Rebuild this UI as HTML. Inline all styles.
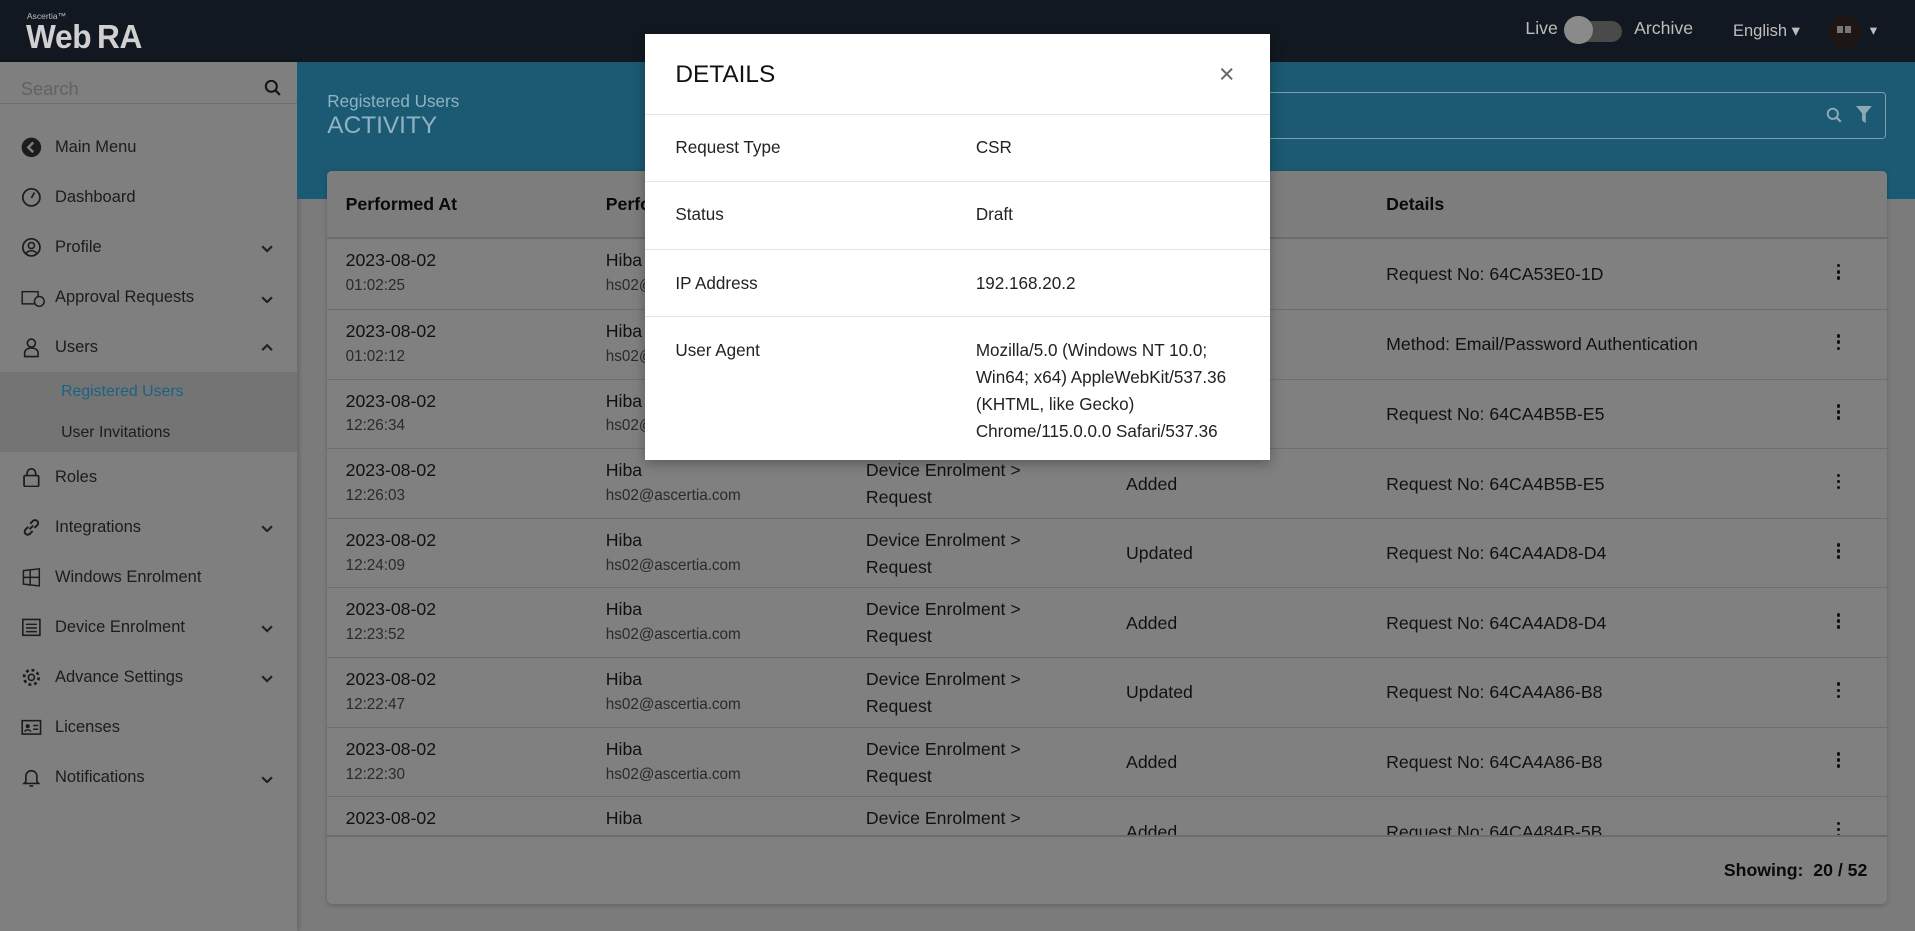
<!DOCTYPE html>
<html><head><meta charset="utf-8"><style>
html,body{margin:0;padding:0;overflow:hidden;width:1915px;height:931px;background:#7b7b7b}
#w{zoom:1.2213;width:1568px;height:762px;position:relative;font-family:"Liberation Sans",sans-serif;color:#111;overflow:hidden}
.a{position:absolute}
#hdr{left:0;top:0;width:1568px;height:51px;background:#121821}
#side{left:0;top:51px;width:243px;height:711px;background:#7f7f7f;box-shadow:2px 0 3px rgba(0,0,0,.15)}
.mi{position:absolute;left:45px;font-size:13.5px;color:#1c1c1c}
.ic{position:absolute;left:17px;width:17px;height:17px}
.chev{position:absolute;left:214px;width:10px;height:6px}
#band{left:243px;top:51px;width:1325px;height:112px;background:#1b5a72}
#card{left:268px;top:140px;width:1277px;height:600px;background:#808080;border-radius:4px;box-shadow:0 1px 4px rgba(0,0,0,.2);overflow:hidden}
.th{position:absolute;top:19px;font-weight:bold;font-size:14.5px;color:#0a0a0a}
.row{position:absolute;left:0;width:1277px;height:57px;border-top:1px solid #6e6e6e;font-size:14.5px;color:#111}
.row span{position:absolute}
.l1{top:9px}.l2{top:31px;font-size:12.5px;color:#2a2a2a}
.kb{position:absolute;left:1236px;top:20px;width:3px}
.kb i{display:block;width:3px;height:3px;background:#111;border-radius:50%;margin-bottom:2px}
#modal{left:528px;top:28px;width:512px;height:349px;background:#fff;box-shadow:0 3px 10px rgba(0,0,0,.3)}
.mr{position:absolute;left:0;width:512px;border-top:1px solid #e3e3e3;font-size:14px;color:#222;line-height:22px}
.mr .k{position:absolute;left:25px;top:17px}
.mr .v{position:absolute;left:271px;top:17px}
</style></head><body><div id="w">
<div id="hdr" class="a">
 <div class="a" style="left:22px;top:9px;font-size:7px;color:#bbb">Ascertia™</div>
 <div class="a" style="left:21px;top:15px;font-size:27px;color:#d0d0d0;letter-spacing:-0.3px;font-weight:bold;transform:scaleX(.96);transform-origin:left">Web<span style="margin-left:5px">RA</span></div>
 <div class="a" style="left:1249px;top:15px;font-size:14.5px;color:#bdbdbd">Live</div>
 <div class="a" style="left:1282px;top:17px;width:46px;height:17px;border-radius:9px;background:#4a4a4a"></div>
 <div class="a" style="left:1281px;top:13px;width:23px;height:23px;border-radius:50%;background:#8a8a8a"></div>
 <div class="a" style="left:1338px;top:15px;font-size:14.5px;color:#bdbdbd">Archive</div>
 <div class="a" style="left:1419px;top:17px;font-size:13.5px;color:#bdbdbd">English ▾</div>
 <div class="a" style="left:1497px;top:12px;width:27px;height:27px;border-radius:50%;background:#1e1614"></div>
 <div class="a" style="left:1504px;top:21px;width:5px;height:6px;background:#777"></div><div class="a" style="left:1511px;top:21px;width:5px;height:6px;background:#777"></div>
 <div class="a" style="left:1531px;top:18px;font-size:12px;color:#bdbdbd">▾</div>
</div>
<div id="side" class="a">
 <div class="a" style="left:17px;top:13px;font-size:15px;color:#626262">Search</div>
 <svg class="a" style="left:216px;top:14px" width="14" height="14" viewBox="0 0 14 14"><circle cx="6" cy="6" r="4.5" fill="none" stroke="#111" stroke-width="1.6"/><path d="M9.3 9.3 13 13" stroke="#111" stroke-width="1.8"/></svg>
 <div class="a" style="left:0;top:33px;width:243px;height:1px;background:#6d6d6d"></div>
 <svg class="ic" style="top:61px" viewBox="0 0 17 17"><circle cx="8.5" cy="8.5" r="8" fill="#1c1c1c"/><path d="M10 4.5 6 8.5 10 12.5" stroke="#7f7f7f" stroke-width="2" fill="none"/></svg>
 <div class="mi" style="top:62px">Main Menu</div>
 <svg class="ic" style="top:102px" viewBox="0 0 17 17"><circle cx="8.5" cy="8.5" r="7" fill="none" stroke="#1c1c1c" stroke-width="1.4"/><path d="M8.5 9 11 4.5" stroke="#1c1c1c" stroke-width="1.4"/></svg>
 <div class="mi" style="top:103px">Dashboard</div>
 <svg class="ic" style="top:143px" viewBox="0 0 17 17"><circle cx="8.5" cy="8.5" r="7" fill="none" stroke="#1c1c1c" stroke-width="1.4"/><circle cx="8.5" cy="7" r="2.5" fill="none" stroke="#1c1c1c" stroke-width="1.3"/><path d="M4 13.5c2-3 7-3 9 0" stroke="#1c1c1c" stroke-width="1.3" fill="none"/></svg>
 <div class="mi" style="top:144px">Profile</div><svg class="chev" style="top:150px" viewBox="0 0 10 6"><path d="M1 1l4 4 4-4" stroke="#222" stroke-width="1.8" fill="none"/></svg>
 <svg class="ic" style="top:185px;width:20px" viewBox="0 0 20 17"><rect x="1" y="3" width="13" height="10" fill="none" stroke="#1c1c1c" stroke-width="1.2"/><circle cx="15" cy="11" r="4" fill="#7f7f7f" stroke="#1c1c1c" stroke-width="1.2"/></svg>
 <div class="mi" style="top:185px">Approval Requests</div><svg class="chev" style="top:191px" viewBox="0 0 10 6"><path d="M1 1l4 4 4-4" stroke="#222" stroke-width="1.8" fill="none"/></svg>
 <svg class="ic" style="top:225px" viewBox="0 0 17 17"><circle cx="8.5" cy="5" r="3.3" fill="none" stroke="#1c1c1c" stroke-width="1.3"/><path d="M3 16v-3c0-2 2-4 5.5-4s5.5 2 5.5 4v3z" fill="none" stroke="#1c1c1c" stroke-width="1.3"/></svg>
 <div class="mi" style="top:226px">Users</div><svg class="chev" style="top:231px" viewBox="0 0 10 6"><path d="M1 5l4-4 4 4" stroke="#222" stroke-width="1.8" fill="none"/></svg>
 <div class="a" style="left:0;top:254px;width:243px;height:65px;background:#747474"></div>
 <div class="mi" style="left:50px;top:263px;font-size:13px;color:#1a6384">Registered Users</div>
 <div class="mi" style="left:50px;top:296px;font-size:13px">User Invitations</div>
 <svg class="ic" style="top:331px" viewBox="0 0 17 17"><rect x="2.5" y="7" width="12" height="9" rx="1" fill="none" stroke="#1c1c1c" stroke-width="1.4"/><path d="M5 7V5a3.5 3.5 0 0 1 7 0v2" fill="none" stroke="#1c1c1c" stroke-width="1.4"/></svg>
 <div class="mi" style="top:332px">Roles</div>
 <svg class="ic" style="top:372px" viewBox="0 0 17 17"><path d="M7 10 10 7M6 8 3.5 10.5a2.5 2.5 0 0 0 3.5 3.5L9.5 11.5M11 9l2.5-2.5A2.5 2.5 0 0 0 10 3L7.5 5.5" fill="none" stroke="#1c1c1c" stroke-width="1.6"/></svg>
 <div class="mi" style="top:373px">Integrations</div><svg class="chev" style="top:379px" viewBox="0 0 10 6"><path d="M1 1l4 4 4-4" stroke="#222" stroke-width="1.8" fill="none"/></svg>
 <svg class="ic" style="top:413px" viewBox="0 0 17 17"><path d="M2 3l13-1.5v14L2 14zM2 8.5h13M7.5 2.5v13" fill="none" stroke="#1c1c1c" stroke-width="1.2"/></svg>
 <div class="mi" style="top:414px">Windows Enrolment</div>
 <svg class="ic" style="top:454px" viewBox="0 0 17 17"><rect x="1.5" y="2" width="14" height="13" fill="none" stroke="#1c1c1c" stroke-width="1.3"/><path d="M4 6h9M4 9h9M4 12h9" stroke="#1c1c1c" stroke-width="1.2"/></svg>
 <div class="mi" style="top:455px">Device Enrolment</div><svg class="chev" style="top:461px" viewBox="0 0 10 6"><path d="M1 1l4 4 4-4" stroke="#222" stroke-width="1.8" fill="none"/></svg>
 <svg class="ic" style="top:495px" viewBox="0 0 17 17"><circle cx="8.5" cy="8.5" r="2.5" fill="none" stroke="#1c1c1c" stroke-width="1.3"/><circle cx="8.5" cy="8.5" r="6" fill="none" stroke="#1c1c1c" stroke-width="2.2" stroke-dasharray="2.4 2.3"/></svg>
 <div class="mi" style="top:496px">Advance Settings</div><svg class="chev" style="top:502px" viewBox="0 0 10 6"><path d="M1 1l4 4 4-4" stroke="#222" stroke-width="1.8" fill="none"/></svg>
 <svg class="ic" style="top:536px" viewBox="0 0 17 17"><rect x="1" y="3" width="15" height="11" fill="none" stroke="#1c1c1c" stroke-width="1.3"/><circle cx="5.5" cy="7.5" r="1.7" fill="#1c1c1c"/><path d="M3 12c1-2 4-2 5 0M10 7h4M10 10h4" stroke="#1c1c1c" stroke-width="1.2" fill="none"/></svg>
 <div class="mi" style="top:537px">Licenses</div>
 <svg class="ic" style="top:577px" viewBox="0 0 17 17"><path d="M4 12V7.5a4.5 4.5 0 0 1 9 0V12l1.5 1.5h-12zM7 15.5h3" fill="none" stroke="#1c1c1c" stroke-width="1.3"/></svg>
 <div class="mi" style="top:578px">Notifications</div><svg class="chev" style="top:584px" viewBox="0 0 10 6"><path d="M1 1l4 4 4-4" stroke="#222" stroke-width="1.8" fill="none"/></svg>
</div>
<div id="band" class="a">
 <div class="a" style="left:25px;top:24px;font-size:14px;color:#8fb3c2">Registered Users</div>
 <div class="a" style="left:25px;top:41px;font-size:20px;color:#8fb3c2">ACTIVITY</div>
 <div class="a" style="left:780px;top:24px;width:520px;height:37px;border:1px solid #7aa0b0;border-radius:3px"></div>
 <svg class="a" style="left:1252px;top:37px" width="13" height="13" viewBox="0 0 14 14"><circle cx="6" cy="6" r="4.5" fill="none" stroke="#8ea9b4" stroke-width="1.7"/><path d="M9.3 9.3 13 13" stroke="#8ea9b4" stroke-width="2"/></svg>
 <svg class="a" style="left:1277px;top:36px" width="13" height="14" viewBox="0 0 13 14"><path d="M0 0h13L8 6v8L5 12V6z" fill="#8ea9b4"/></svg>
</div>
<div id="card" class="a">
 <div class="a" style="left:0;top:0;width:1277px;height:55px;background:#7d7d7d"></div>
 <div class="th" style="left:15px">Performed At</div>
 <div class="th" style="left:228px">Performed By</div>
 <div class="th" style="left:867px">Details</div>
 <div class="a" style="left:0;top:54px;width:1277px;height:2px;background:#6c6c6c"></div>
 <div class="a" style="left:0;top:56px;width:1277px;height:488px;overflow:hidden">
  <div class="row" style="top:0;border-top:0"><span class="l1" style="left:15px">2023-08-02</span><span class="l2" style="left:15px">01:02:25</span><span class="l1" style="left:228px">Hiba</span><span class="l2" style="left:228px">hs02@ascertia.com</span><span style="left:867px;top:20px">Request No: 64CA53E0-1D</span><div class="kb"><i></i><i></i><i></i></div></div>
  <div class="row" style="top:57px"><span class="l1" style="left:15px">2023-08-02</span><span class="l2" style="left:15px">01:02:12</span><span class="l1" style="left:228px">Hiba</span><span class="l2" style="left:228px">hs02@ascertia.com</span><span style="left:867px;top:20px">Method: Email/Password Authentication</span><div class="kb"><i></i><i></i><i></i></div></div>
  <div class="row" style="top:114px"><span class="l1" style="left:15px">2023-08-02</span><span class="l2" style="left:15px">12:26:34</span><span class="l1" style="left:228px">Hiba</span><span class="l2" style="left:228px">hs02@ascertia.com</span><span style="left:867px;top:20px">Request No: 64CA4B5B-E5</span><div class="kb"><i></i><i></i><i></i></div></div>
  <div class="row" style="top:171px"><span class="l1" style="left:15px">2023-08-02</span><span class="l2" style="left:15px">12:26:03</span><span class="l1" style="left:228px">Hiba</span><span class="l2" style="left:228px">hs02@ascertia.com</span><span class="l1" style="left:441px">Device Enrolment &gt;</span><span style="left:441px;top:31px">Request</span><span style="left:654px;top:20px">Added</span><span style="left:867px;top:20px">Request No: 64CA4B5B-E5</span><div class="kb"><i></i><i></i><i></i></div></div>
  <div class="row" style="top:228px"><span class="l1" style="left:15px">2023-08-02</span><span class="l2" style="left:15px">12:24:09</span><span class="l1" style="left:228px">Hiba</span><span class="l2" style="left:228px">hs02@ascertia.com</span><span class="l1" style="left:441px">Device Enrolment &gt;</span><span style="left:441px;top:31px">Request</span><span style="left:654px;top:20px">Updated</span><span style="left:867px;top:20px">Request No: 64CA4AD8-D4</span><div class="kb"><i></i><i></i><i></i></div></div>
  <div class="row" style="top:285px"><span class="l1" style="left:15px">2023-08-02</span><span class="l2" style="left:15px">12:23:52</span><span class="l1" style="left:228px">Hiba</span><span class="l2" style="left:228px">hs02@ascertia.com</span><span class="l1" style="left:441px">Device Enrolment &gt;</span><span style="left:441px;top:31px">Request</span><span style="left:654px;top:20px">Added</span><span style="left:867px;top:20px">Request No: 64CA4AD8-D4</span><div class="kb"><i></i><i></i><i></i></div></div>
  <div class="row" style="top:342px"><span class="l1" style="left:15px">2023-08-02</span><span class="l2" style="left:15px">12:22:47</span><span class="l1" style="left:228px">Hiba</span><span class="l2" style="left:228px">hs02@ascertia.com</span><span class="l1" style="left:441px">Device Enrolment &gt;</span><span style="left:441px;top:31px">Request</span><span style="left:654px;top:20px">Updated</span><span style="left:867px;top:20px">Request No: 64CA4A86-B8</span><div class="kb"><i></i><i></i><i></i></div></div>
  <div class="row" style="top:399px"><span class="l1" style="left:15px">2023-08-02</span><span class="l2" style="left:15px">12:22:30</span><span class="l1" style="left:228px">Hiba</span><span class="l2" style="left:228px">hs02@ascertia.com</span><span class="l1" style="left:441px">Device Enrolment &gt;</span><span style="left:441px;top:31px">Request</span><span style="left:654px;top:20px">Added</span><span style="left:867px;top:20px">Request No: 64CA4A86-B8</span><div class="kb"><i></i><i></i><i></i></div></div>
  <div class="row" style="top:456px"><span class="l1" style="left:15px">2023-08-02</span><span class="l1" style="left:228px">Hiba</span><span class="l1" style="left:441px">Device Enrolment &gt;</span><span style="left:654px;top:20px">Added</span><span style="left:867px;top:20px">Request No: 64CA484B-5B</span><div class="kb"><i></i><i></i><i></i></div></div>
 </div>
 <div class="a" style="left:0;top:544px;width:1277px;height:1px;background:#6c6c6c"></div>
 <div class="a" style="right:16px;top:564px;font-size:14.5px;font-weight:bold;color:#0a0a0a">Showing:&nbsp; 20 / 52</div>
</div>
<div id="modal" class="a">
 <div class="a" style="left:25px;top:22px;font-size:20px;color:#111">DETAILS</div>
 <div class="a" style="left:470px;top:20px;font-size:22px;color:#666">×</div>
 <div class="mr" style="top:65px;height:55px"><span class="k">Request Type</span><span class="v">CSR</span></div>
 <div class="mr" style="top:120px;height:55px"><span class="k">Status</span><span class="v">Draft</span></div>
 <div class="mr" style="top:176px;height:55px"><span class="k">IP Address</span><span class="v">192.168.20.2</span></div>
 <div class="mr" style="top:231px;height:118px"><span class="k">User Agent</span><span class="v">Mozilla/5.0 (Windows NT 10.0;<br>Win64; x64) AppleWebKit/537.36<br>(KHTML, like Gecko)<br>Chrome/115.0.0.0 Safari/537.36</span></div>
</div>
</div></body></html>
